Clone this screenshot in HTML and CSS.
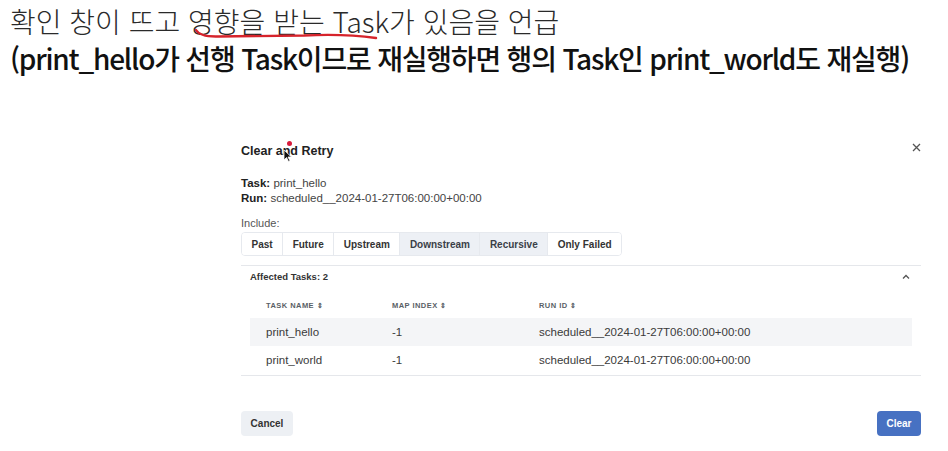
FILE: index.html
```html
<!DOCTYPE html>
<html lang="ko">
<head>
    <meta charset="UTF-8">
    <meta name="viewport" content="width=device-width, initial-scale=1.0">
    <title>Clear and Retry</title>
    <link rel="stylesheet" href="styles.css">
</head>
<body>
    <div class="note">
        <p class="note-line thin">확인 창이 뜨고 영향을 받는 Task가 있음을 언급</p>
        <p class="note-line heavy">(print_hello가 선행 Task이므로 재실행하면 행의 Task인 print_world도 재실행)</p>
        <svg class="scribble" width="200" height="14" viewBox="0 0 200 14">
            <path d="M2 2 Q6 9 24 8.5 L110 7.5 Q150 5.5 182 10" fill="none" stroke="#d6232b" stroke-width="2.4" stroke-linecap="round"/>
        </svg>
    </div>

    <div class="modal">
        <div class="modal-header">
            <h3>Clear and Retry</h3>
            <button class="close" aria-label="close">
                <svg width="9" height="9" viewBox="0 0 9 9"><path d="M1 1 L8 8 M8 1 L1 8" stroke="#555" stroke-width="1.3"/></svg>
            </button>
            <span class="pointer-dot"></span>
            <svg class="cursor" width="9" height="13" viewBox="0 0 9 13"><path d="M1 1 L1 11 L3.5 8.5 L5.5 12.5 L7 11.8 L5 8 L8.5 8 Z" fill="#111" stroke="#fff" stroke-width="0.8"/></svg>
        </div>

        <div class="modal-body">
            <div class="meta"><b>Task:</b> print_hello</div>
            <div class="meta"><b>Run:</b> scheduled__2024-01-27T06:00:00+00:00</div>
            <div class="include-label">Include:</div>
            <div class="btn-group">
                <button>Past</button>
                <button>Future</button>
                <button>Upstream</button>
                <button class="on">Downstream</button>
                <button class="on">Recursive</button>
                <button>Only Failed</button>
            </div>

            <div class="accordion">
                <div class="acc-head">
                    <span>Affected Tasks: 2</span>
                    <svg width="8" height="6" viewBox="0 0 8 6"><path d="M1 4.5 L4 1.5 L7 4.5" fill="none" stroke="#555" stroke-width="1.3"/></svg>
                </div>
                <div class="acc-panel">
                    <table class="tasks">
                        <thead>
                            <tr>
                                <th class="c1">Task Name <span class="sort">&#8661;</span></th>
                                <th class="c2">Map Index <span class="sort">&#8661;</span></th>
                                <th>Run ID <span class="sort">&#8661;</span></th>
                            </tr>
                        </thead>
                        <tbody>
                            <tr class="striped">
                                <td>print_hello</td>
                                <td>-1</td>
                                <td>scheduled__2024-01-27T06:00:00+00:00</td>
                            </tr>
                            <tr>
                                <td>print_world</td>
                                <td>-1</td>
                                <td>scheduled__2024-01-27T06:00:00+00:00</td>
                            </tr>
                        </tbody>
                    </table>
                </div>
            </div>
        </div>

        <div class="modal-footer">
            <button class="btn cancel">Cancel</button>
            <button class="btn clear">Clear</button>
        </div>
    </div>
</body>
</html>
```

FILE: styles.css
```css
body {
    margin: 0;
    background: #fff;
    font-family: "Liberation Sans", Arial, sans-serif;
    color: #222;
}

.note {
    position: relative;
    padding: 4px 0 0 10px;
    font-family: "Noto Sans CJK KR", "Noto Sans", sans-serif;
}

.note-line {
    margin: 0;
    font-size: 28px;
    white-space: nowrap;
}

.note-line.thin {
    line-height: 34px;
    font-weight: 300;
    color: #2a2a2a;
}

.note-line.heavy {
    line-height: 40px;
    font-weight: 500;
    letter-spacing: -1.2px;
    color: #111;
}

.scribble {
    position: absolute;
    left: 194px;
    top: 28px;
}

.modal {
    width: 680px;
    margin: 62px 0 0 241px;
}

.modal-header {
    position: relative;
    display: flex;
    justify-content: space-between;
    align-items: flex-start;
}

.modal-header h3 {
    margin: 0;
    font-size: 12.5px;
    line-height: 22px;
    font-weight: 700;
    color: #222;
}

.close {
    border: 0;
    background: none;
    padding: 0;
    margin-top: 3px;
    width: 9px;
    height: 9px;
    display: flex;
}

.pointer-dot {
    position: absolute;
    left: 46px;
    top: 1px;
    width: 5px;
    height: 5px;
    border-radius: 50%;
    background: #d81b3c;
}

.cursor {
    position: absolute;
    left: 42px;
    top: 9px;
}

.modal-body {
    padding-top: 14px;
}

.meta {
    font-size: 11.5px;
    line-height: 15px;
    color: #444;
}

    .meta b {
        color: #222;
    }

.include-label {
    margin-top: 10px;
    font-size: 11px;
    line-height: 15px;
    color: #555;
}

.btn-group {
    display: inline-flex;
    margin-top: 1px;
    border: 1px solid #e6e9ee;
    border-radius: 4px;
    overflow: hidden;
}

    .btn-group button {
        height: 22px;
        padding: 0 9.5px;
        border: 0;
        border-right: 1px solid #e6e9ee;
        background: #fff;
        font-family: "Liberation Sans", Arial, sans-serif;
        font-size: 10px;
        font-weight: 700;
        color: #333;
    }

    .btn-group button:last-child {
        border-right: 0;
    }

    .btn-group button.on {
        background: #edf0f5;
        color: #3a3f48;
    }

.accordion {
    margin-top: 9px;
    border-top: 1px solid #e5e7eb;
    border-bottom: 1px solid #e5e7eb;
}

.acc-head {
    display: flex;
    justify-content: space-between;
    align-items: center;
    height: 21px;
    padding: 0 11px 0 9px;
    font-size: 9.5px;
    font-weight: 700;
    color: #333;
}

.acc-panel {
    padding: 5px 9px 1px;
}

.tasks {
    width: 100%;
    border-collapse: collapse;
}

    .tasks th {
        height: 26px;
        padding: 0 0 0 16px;
        text-align: left;
        font-size: 7.5px;
        font-weight: 700;
        letter-spacing: 0.06em;
        text-transform: uppercase;
        color: #5a5f66;
    }

    .tasks th.c1 {
        width: 110px;
    }

    .tasks th.c2 {
        width: 131px;
    }

    .sort {
        font-size: 7px;
        letter-spacing: 0;
    }

    .tasks td {
        height: 28px;
        padding: 0 0 0 16px;
        font-size: 11.5px;
        color: #3a3a3a;
    }

    .tasks tr.striped td {
        background: #f4f5f7;
    }

.modal-footer {
    display: flex;
    justify-content: space-between;
    margin-top: 35px;
}

.btn {
    height: 25px;
    border: 0;
    border-radius: 4px;
    font-family: "Liberation Sans", Arial, sans-serif;
    font-size: 10px;
    font-weight: 700;
}

.btn.cancel {
    width: 52px;
    background: #edf0f4;
    color: #333;
}

.btn.clear {
    width: 44px;
    background: #4771c2;
    color: #fff;
}
```
